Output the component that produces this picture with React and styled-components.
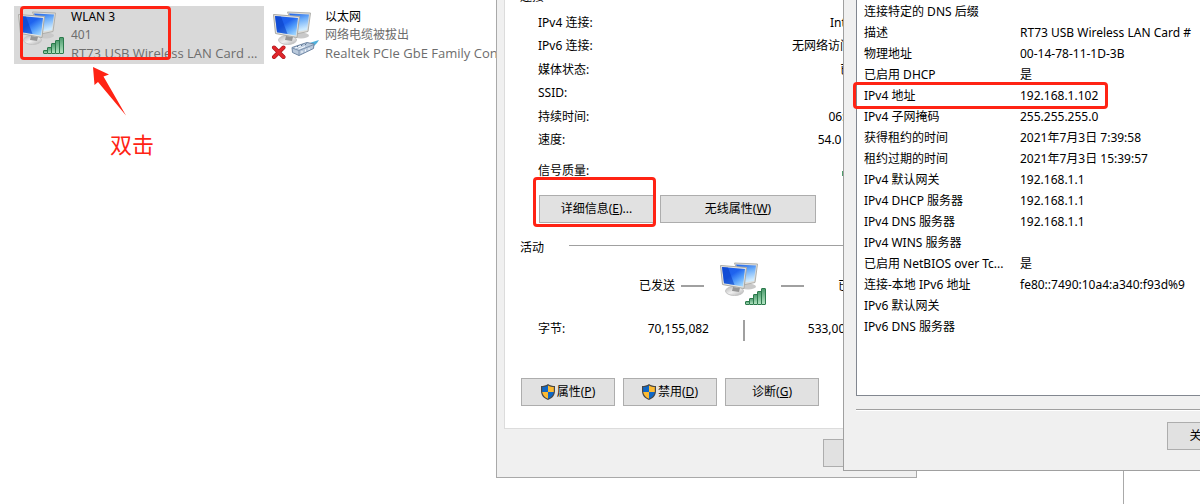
import React from 'react';
import styled, { createGlobalStyle } from 'styled-components';

const connection = [
  { label: 'IPv4 连接:', value: 'Internet' },
  { label: 'IPv6 连接:', value: '无网络访问权限' },
  { label: '媒体状态:', value: '已启用' },
  { label: 'SSID:', value: '401' },
  { label: '持续时间:', value: '06:12:40' },
  { label: '速度:', value: '54.0 Mbps' },
];

const details = [
  { name: '连接特定的 DNS 后缀', value: '' },
  { name: '描述', value: 'RT73 USB Wireless LAN Card #' },
  { name: '物理地址', value: '00-14-78-11-1D-3B' },
  { name: '已启用 DHCP', value: '是' },
  { name: 'IPv4 地址', value: '192.168.1.102', marked: true },
  { name: 'IPv4 子网掩码', value: '255.255.255.0' },
  { name: '获得租约的时间', value: '2021年7月3日 7:39:58' },
  { name: '租约过期的时间', value: '2021年7月3日 15:39:57' },
  { name: 'IPv4 默认网关', value: '192.168.1.1' },
  { name: 'IPv4 DHCP 服务器', value: '192.168.1.1' },
  { name: 'IPv4 DNS 服务器', value: '192.168.1.1' },
  { name: 'IPv4 WINS 服务器', value: '' },
  { name: '已启用 NetBIOS over Tc...', value: '是' },
  { name: '连接-本地 IPv6 地址', value: 'fe80::7490:10a4:a340:f93d%9' },
  { name: 'IPv6 默认网关', value: '' },
  { name: 'IPv6 DNS 服务器', value: '' },
];

const Monitors = ({ id, x = 0 }) => (
  <g transform={`translate(${x} 0)`}>
    <defs>
      <linearGradient id={`${id}-front`} x1='0' y1='0' x2='0.8' y2='1'>
        <stop offset='0' stopColor='#1c5cea' />
        <stop offset='0.45' stopColor='#1f63ee' />
        <stop offset='0.7' stopColor='#4f9afa' />
        <stop offset='1' stopColor='#9fd6ff' />
      </linearGradient>
      <linearGradient id={`${id}-back`} x1='0' y1='0' x2='0.3' y2='1'>
        <stop offset='0' stopColor='#1d5fe6' />
        <stop offset='0.45' stopColor='#6aabf8' />
        <stop offset='1' stopColor='#cdeaff' />
      </linearGradient>
      <linearGradient id={`${id}-foot`} x1='0' y1='0' x2='1' y2='1'>
        <stop offset='0' stopColor='#b4b4b4' />
        <stop offset='0.5' stopColor='#efefef' />
        <stop offset='1' stopColor='#adadad' />
      </linearGradient>
    </defs>
    <ellipse cx='29' cy='24.5' rx='8' ry='3' fill='#c9c9c9' />
    <path d='M15.5 1 L38.5 2 L36 20.5 L24 23 Z' fill='#dededb' stroke='#b0b0ac' />
    <path d='M17 2.5 L37 3.5 L35 19 L24 20.5 Z' fill={`url(#${id}-back)`} />
    <ellipse cx='15.5' cy='29' rx='9' ry='4.5' fill={`url(#${id}-foot)`} stroke='#c4c4c4' />
    <path d='M14 25 L21 26 L20 30 L13 29 Z' fill='#969696' />
    <path d='M1.5 3.5 L27.5 5.5 L25 26.5 L3.5 22.5 Z' fill='#e4e4e1' stroke='#aaaaa6' />
    <path d='M3 5 L26 7 L24 24.5 L5 21.2 Z' fill={`url(#${id}-front)`} />
    <path d='M3 5 L9 5.5 L15.5 23 L5 21.2 Z' fill='#0a3fc4' opacity='0.6' />
  </g>
);

const WirelessIcon = ({ id }) => (
  <Glyph viewBox='0 0 48 48' aria-hidden='true'>
    <Monitors id={id} />
    <defs>
      <linearGradient id={`${id}-bar`} x1='0' y1='0' x2='0' y2='1'>
        <stop offset='0' stopColor='#4b9a6c' />
        <stop offset='1' stopColor='#b5e6c4' />
      </linearGradient>
    </defs>
    {[3, 6, 10, 13, 16].map((h, i) => (
      <rect
        key={h}
        x={26.5 + i * 4}
        y={42.5 - h}
        width='4'
        height={h}
        rx='0.5'
        fill={`url(#${id}-bar)`}
        stroke='#2c7a4c'
      />
    ))}
  </Glyph>
);

const EthernetIcon = () => (
  <Glyph viewBox='0 0 48 48' aria-hidden='true'>
    <Monitors id='eth' x={1} />
    <path d='M36 34 L40 31.5 L48 29 L46 32 L42 36 Z' fill='#4fb0dc' />
    <path d='M21 36.5 L36 31.5 L43 33 L42.5 37.5 L28 44.5 L21.5 41.5 Z' fill='#b9c9dc' stroke='#6f86a3' />
    <path d='M21 37 L28 39.5 L43 33.5 M28 39.5 L28 44.5' fill='none' stroke='#7d92ad' />
    <path d='M24 37 L31 34.5 M27.5 38 L34 35.5 M31 40 L31 42 M34.5 38.5 L34.5 40.5 M38 37 L38 39' stroke='#f7fbff' />
    <path d='M26 36 L27.5 34.5 M30 35 L31.5 33.5 M34 34 L35.5 32.5' stroke='#5f7590' />
    <path d='M3 36.5 L12.5 46 M12.5 36.5 L3 46' stroke='#a01418' strokeWidth='4' strokeLinecap='round' />
    <path d='M3 36.5 L12.5 46 M12.5 36.5 L3 46' stroke='#e0262b' strokeWidth='3' strokeLinecap='round' />
  </Glyph>
);

const ShieldIcon = () => (
  <Shield viewBox='0 0 14 16' aria-hidden='true'>
    <path d='M7 0 C5 1.4 2.5 2 0 2 L0 7 C0 11.5 3 14.5 7 16 C11 14.5 14 11.5 14 7 L14 2 C11.5 2 9 1.4 7 0 Z' fill='#474747' />
    <path d='M7 1.4 C5 2.6 3.2 3 1.2 3.1 L1.2 8 L7 8 Z' fill='#0f67c5' />
    <path d='M7 1.4 C9 2.6 10.8 3 12.8 3.1 L12.8 8 L7 8 Z' fill='#fdbb33' />
    <path d='M1.2 8 C1.7 11.4 4 13.6 7 14.8 L7 8 Z' fill='#fdbb33' />
    <path d='M12.8 8 C12.3 11.4 10 13.6 7 14.8 L7 8 Z' fill='#0f67c5' />
  </Shield>
);

const App = () => {
  return (
    <Desktop>
      <GlobalStyle />
      <Explorer>
        <Tile $selected>
          <WirelessIcon id='wlan' />
          <div>
            <TileName>WLAN 3</TileName>
            <TileInfo>401</TileInfo>
            <AdapterName>RT73 USB Wireless LAN Card ...</AdapterName>
          </div>
          <TileMark />
        </Tile>
        <Tile>
          <EthernetIcon />
          <div>
            <TileName>以太网</TileName>
            <TileInfo>网络电缆被拔出</TileInfo>
            <AdapterName>Realtek PCIe GbE Family Controller</AdapterName>
          </div>
        </Tile>
      </Explorer>
      <Hint>
        <Arrow viewBox='0 0 34 50' aria-hidden='true'>
          <path d='M0 0 L16 7.5 L10.5 9.5 L33 48.5 L5 15 L1.5 18 Z' fill='#ff2314' />
        </Arrow>
        <HintText>双击</HintText>
      </Hint>

      <StatusDialog>
        <Panel>
          <Heading>连接</Heading>
          <Indent>
            <StatList>
              {connection.map(({ label, value }) => (
                <Stat key={label}>
                  <dt>{label}</dt>
                  <dd>{value}</dd>
                </Stat>
              ))}
            </StatList>
            <Signal>
              <span>信号质量:</span>
              <SignalBars viewBox='0 0 34 16' aria-hidden='true'>
                {[5, 7, 9, 11, 13].map((h, i) => (
                  <rect key={h} x={i * 7} y={13 - h} width='5' height={h} fill='#4f9d6c' />
                ))}
              </SignalBars>
            </Signal>
            <Row>
              <Marked>
                <Button $width={115}>
                  详细信息(<u>E</u>)...
                </Button>
              </Marked>
              <Button $width={156}>
                无线属性(<u>W</u>)
              </Button>
            </Row>
          </Indent>
          <Heading $spaced>活动</Heading>
          <Indent>
            <Activity>
              <Sent>已发送</Sent>
              <Dash />
              <WirelessIcon id='activity' />
              <Dash />
              <span>已收到</span>
            </Activity>
            <Bytes>
              <span>字节:</span>
              <Amount>70,155,082</Amount>
              <Divider />
              <Amount>533,004,216</Amount>
            </Bytes>
          </Indent>
          <Actions>
            <Button $width={94}>
              <ShieldIcon />
              属性(<u>P</u>)
            </Button>
            <Button $width={94}>
              <ShieldIcon />
              禁用(<u>D</u>)
            </Button>
            <Button $width={94}>
              诊断(<u>G</u>)
            </Button>
          </Actions>
        </Panel>
        <StatusFooter>
          <Button $width={86}>
            关闭(<u>C</u>)
          </Button>
        </StatusFooter>
      </StatusDialog>

      <DetailsDialog>
        <ListBox>
          <Table>
            <tbody>
              {details.map(({ name, value, marked }) => (
                <tr key={name}>
                  <th scope='row'>
                    {name}
                    {marked && <RowMark />}
                  </th>
                  <td>{value}</td>
                </tr>
              ))}
            </tbody>
          </Table>
        </ListBox>
        <DetailsFooter>
          <Button $width={84}>
            关闭(<u>C</u>)
          </Button>
        </DetailsFooter>
      </DetailsDialog>
    </Desktop>
  );
};

const GlobalStyle = createGlobalStyle`
  * {
    box-sizing: border-box;
  }
  body {
    margin: 0;
    background: #fff;
    color: #000;
    font: 12px/18px 'Noto Sans', 'Noto Sans CJK SC', sans-serif;
  }
  p, dl, dd {
    margin: 0;
  }
`;

const Desktop = styled.main`
  position: relative;
  height: 100vh;
  overflow: hidden;
  white-space: nowrap;
`;

const Explorer = styled.section`
  display: flex;
  align-items: flex-start;
  gap: 4px;
  width: 1124px;
  height: 100%;
  padding: 6px 14px;
  border-right: 1px solid #a9a9a9;
`;

const Tile = styled.article`
  position: relative;
  display: flex;
  gap: 6px;
  width: 250px;
  height: 58px;
  padding: 2px 3px;
  background: ${({ $selected }) => ($selected ? '#d9d9d9' : 'transparent')};
`;

const TileName = styled.p`
  color: #000;
`;

const TileInfo = styled.p`
  color: #6d6d6d;
`;

const AdapterName = styled(TileInfo)`
  font-family: 'Open Sans', 'Noto Sans CJK SC', sans-serif;
  font-size: 13px;
`;

const Glyph = styled.svg`
  flex: none;
  width: 48px;
  height: 48px;
  margin-top: 3px;
`;

const mark = `
  content: '';
  position: absolute;
  border: 3px solid #ff2314;
  border-radius: 4px;
  pointer-events: none;
`;

const TileMark = styled.span`
  ${mark}
  top: 0;
  left: 6px;
  width: 151px;
  height: 54px;
`;

const Hint = styled.div`
  position: absolute;
  top: 67px;
  left: 93px;
  color: #ff2314;
`;

const Arrow = styled.svg`
  display: block;
  width: 34px;
  height: 50px;
`;

const HintText = styled.p`
  padding: 13px 17px;
  font-size: 22px;
  line-height: 28px;
`;

const StatusDialog = styled.section`
  position: absolute;
  top: -12px;
  left: 496px;
  width: 421px;
  padding: 0 7px 10px;
  border: 1px solid #a9a9a9;
  border-top: 0;
  background: #f0f0f0;
`;

const Panel = styled.div`
  padding: 0 15px 22px;
  border: 1px solid #dcdcdc;
  border-top: 0;
  background: #fff;
`;

const Heading = styled.div`
  display: flex;
  align-items: center;
  gap: 25px;
  margin-top: ${({ $spaced }) => ($spaced ? '16px' : '0')};
  &::after {
    content: '';
    flex: 1;
    height: 1px;
    margin-bottom: 6px;
    background: #a0a0a0;
  }
`;

const Indent = styled.div`
  padding: 0 17px 0 18px;
`;

const StatList = styled.dl`
  display: grid;
  grid-auto-rows: 1fr;
  align-items: center;
  height: 141px;
  margin-top: 5px;
`;

const Stat = styled.div`
  display: flex;
  justify-content: space-between;
`;

const Signal = styled.div`
  display: flex;
  align-items: center;
  justify-content: space-between;
  height: 24px;
  margin: 7px 0 12px;
`;

const SignalBars = styled.svg`
  width: 34px;
  height: 16px;
`;

const Row = styled.div`
  display: flex;
  gap: 6px;
  padding-left: 1px;
`;

const Marked = styled.div`
  position: relative;
  &::after {
    ${mark}
    inset: -18px -2px -4px -6px;
  }
`;

const Button = styled.button`
  display: flex;
  align-items: center;
  justify-content: center;
  flex: none;
  width: ${({ $width }) => $width}px;
  height: 28px;
  padding: 0;
  border: 1px solid #adadad;
  background: #e1e1e1;
  color: #000;
  font: inherit;
`;

const Shield = styled.svg`
  width: 14px;
  height: 16px;
  margin-right: 2px;
`;

const Activity = styled.div`
  display: grid;
  grid-template-columns: 143px 38px 62px 57px 1fr;
  align-items: center;
  height: 48px;
  margin-top: 5px;
  ${Glyph} {
    margin: 0;
  }
`;

const Sent = styled.span`
  padding-right: 6px;
  text-align: right;
`;

const Dash = styled.span`
  width: 23px;
  height: 2px;
  background: #a0a0a0;
`;

const Bytes = styled.div`
  display: grid;
  grid-template-columns: 60px 111px 36px 1fr;
  align-items: start;
  margin-top: 8px;
  line-height: 22px;
`;

const Amount = styled.span`
  text-align: right;
`;

const Divider = styled.span`
  justify-self: end;
  width: 2px;
  height: 21px;
  margin-top: 2px;
  background: #a0a0a0;
`;

const Actions = styled.div`
  display: flex;
  gap: 8px;
  margin: 37px 1px 0;
`;

const StatusFooter = styled.footer`
  display: flex;
  justify-content: flex-end;
  margin-top: 10px;
`;

const DetailsDialog = styled.section`
  position: absolute;
  top: 0;
  left: 843px;
  width: 421px;
  padding: 0 12px;
  border: 1px solid #a0a0a0;
  border-top: 0;
  background: #f0f0f0;
`;

const ListBox = styled.div`
  padding: 1px 7px 58px;
  border: 1px solid #828790;
  border-top: 0;
  background: #fff;
`;

const Table = styled.table`
  width: 100%;
  table-layout: fixed;
  border-collapse: collapse;
  th,
  td {
    height: 21px;
    padding: 0;
    font-weight: normal;
    text-align: left;
  }
  th {
    position: relative;
    width: 156px;
  }
`;

const RowMark = styled.span`
  ${mark}
  top: -3px;
  left: -11px;
  width: 255px;
  height: 27px;
`;

const DetailsFooter = styled.footer`
  display: flex;
  justify-content: flex-end;
  margin-top: 13px;
  padding: 12px 0 20px;
  border-top: 1px solid #a0a0a0;
  box-shadow: inset 0 1px #fff;
`;

export default App;
